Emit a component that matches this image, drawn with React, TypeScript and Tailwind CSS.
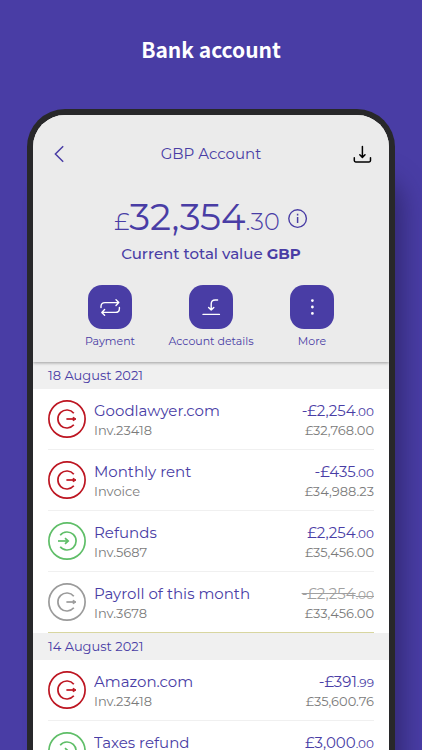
import type { ReactNode } from "react";

type IKind = "out" | "in" | "void";

type ITransaction = {
  name: string;
  reference: string;
  amount: string;
  pence: string;
  balance: string;
  kind: IKind;
};

type IDay = {
  date: string;
  items: ITransaction[];
};

const DAYS: IDay[] = [
  {
    date: "18 August 2021",
    items: [
      { name: "Goodlawyer.com", reference: "Inv.23418", amount: "-£2,254", pence: ".00", balance: "£32,768.00", kind: "out" },
      { name: "Monthly rent", reference: "Invoice", amount: "-£435", pence: ".00", balance: "£34,988.23", kind: "out" },
      { name: "Refunds", reference: "Inv.5687", amount: "£2,254", pence: ".00", balance: "£35,456.00", kind: "in" },
      { name: "Payroll of this month", reference: "Inv.3678", amount: "-£2,254", pence: ".00", balance: "£33,456.00", kind: "void" },
    ],
  },
  {
    date: "14 August 2021",
    items: [
      { name: "Amazon.com", reference: "Inv.23418", amount: "-£391", pence: ".99", balance: "£35,600.76", kind: "out" },
      { name: "Taxes refund", reference: "Inv.5688", amount: "£3,000", pence: ".00", balance: "£35,992.75", kind: "in" },
    ],
  },
];

const ICON_COLOR: Record<IKind, string> = {
  out: "text-[#bd1622]",
  in: "text-[#5fbe68]",
  void: "text-[#9b9b9b]",
};

export default function App() {
  return (
    <div className="flex h-screen flex-col overflow-hidden bg-[#493da5]">
      <h1 className="pt-[35px] text-center font-['Noto_Sans_CJK_SC','Noto_Sans',sans-serif] text-[21px] leading-7 font-semibold text-white">
        Bank account
      </h1>

      <main className="mx-[27px] mt-[46px] flex min-h-0 flex-1 flex-col overflow-hidden rounded-t-[38px] border-x-6 border-t-6 border-[#28282a] bg-white font-['Montserrat','Inter',sans-serif] text-[#493da5] shadow-[16px_60px_24px_-8px_rgba(35,28,85,0.6)]">
        <AccountHeader />
        {DAYS.map((day) => (
          <DaySection key={day.date} day={day} />
        ))}
      </main>
    </div>
  );
}

function AccountHeader() {
  return (
    <header className="relative z-10 shrink-0 bg-[#ebebeb] pb-[13px] shadow-[0_1px_3px_rgba(0,0,0,0.35)]">
      <div className="flex items-center justify-between px-[15px] pt-[27px]">
        <button type="button" aria-label="Back" className="flex size-6 items-center justify-center">
          <svg viewBox="0 0 24 24" className="size-6" fill="none" stroke="currentColor" strokeWidth="1.5">
            <path d="M15.2 4.2 7.4 12l7.8 7.8" />
          </svg>
        </button>
        <h2 className="text-[15px] leading-6">GBP Account</h2>
        <button type="button" aria-label="Download" className="flex size-6 items-center justify-center text-black">
          <svg viewBox="0 0 24 24" className="size-6" fill="none" stroke="currentColor" strokeWidth="1.5" strokeLinecap="round" strokeLinejoin="round">
            <path d="M12.4 4.6v10.6M9.8 12.8l2.6 2.6 2.6-2.6" />
            <path d="M4.3 15.8v2.8q0 1.4 1.4 1.4h13.4q1.4 0 1.4-1.4v-2.8" />
          </svg>
        </button>
      </div>

      <div className="mt-[29px] flex items-center justify-center gap-2">
        <p className="text-2xl leading-[43px] font-light">
          £<span className="text-[37px] font-normal">32,354</span>.30
        </p>
        <button type="button" aria-label="About this value" className="size-5">
          <svg viewBox="0 0 20 20" className="size-5 overflow-visible" fill="none" stroke="currentColor" strokeWidth="1.4">
            <circle cx="9.6" cy="9.6" r="8.8" />
            <path d="M9.6 8v6M9.6 4.8v1.6" strokeWidth="1.5" />
          </svg>
        </button>
      </div>
      <p className="text-center text-[15px] leading-[22px] font-medium">
        Current total value <span className="font-bold">GBP</span>
      </p>

      <nav className="mt-5 flex justify-center">
        <Action label="Payment">
          <path d="M3 12.6v-1q0-4 4-4h13.6M18 4.8l2.8 2.8-2.8 2.8" />
          <path d="M21.4 12.4v1q0 4-4 4H3.8M6.6 14.6l-2.8 2.8 2.8 2.8" />
        </Action>
        <Action label="Account details">
          <path d="M18.6 5h-2.4q-4 0-4 4v6M9.6 12.4l2.6 2.7 2.6-2.7" />
          <path d="M4 19.4h16.4" />
        </Action>
        <Action label="More">
          <path d="M12.4 5.6v.01M12.4 12v.01M12.4 18.4v.01" strokeWidth="2.8" />
        </Action>
      </nav>
    </header>
  );
}

function Action({ label, children }: { label: string; children: ReactNode }) {
  return (
    <button type="button" className="flex w-[101px] flex-col items-center">
      <span className="flex size-11 items-center justify-center rounded-[14px] bg-[#493da5] text-white">
        <svg viewBox="0 0 24 24" className="size-6" fill="none" stroke="currentColor" strokeWidth="1.4" strokeLinecap="round" strokeLinejoin="round">
          {children}
        </svg>
      </span>
      <span className="mt-1 text-[11px] leading-4 whitespace-nowrap">{label}</span>
    </button>
  );
}

function DaySection({ day }: { day: IDay }) {
  return (
    <section className="shrink-0">
      <h3 className="bg-[#f0f0f0] px-[15px] text-[13px] leading-[27px]">{day.date}</h3>
      <ul className="px-[15px]">
        {day.items.map((item) => (
          <TransactionRow key={item.name} item={item} />
        ))}
      </ul>
    </section>
  );
}

function TransactionRow({ item }: { item: ITransaction }) {
  const cancelled = item.kind === "void";

  return (
    <li className="flex items-center gap-2 border-b border-[#f0f0f0] py-[11px] last:border-[#d8d6a0]">
      <TransferIcon kind={item.kind} />
      <div className="min-w-0 flex-1">
        <p className="truncate text-[15px] leading-[22px]">{item.name}</p>
        <p className="text-[13px] leading-4 text-[#7b7b7b]">{item.reference}</p>
      </div>
      <div className="text-right">
        <p className={`text-[15px] leading-[22px] ${cancelled ? "text-[#a0a0a0] line-through" : ""}`}>
          {item.amount}
          <span className="text-xs">{item.pence}</span>
        </p>
        <p className="text-[13px] leading-4 text-[#7b7b7b]">{item.balance}</p>
      </div>
    </li>
  );
}

function TransferIcon({ kind }: { kind: IKind }) {
  return (
    <svg viewBox="0 0 38 38" className={`size-[38px] shrink-0 ${ICON_COLOR[kind]}`} fill="none" stroke="currentColor" strokeWidth="1.7">
      <circle cx="19" cy="19" r="18.1" />
      {kind === "in" ? (
        <>
          <path d="M12.2 13.2a9 9 0 1 1 0 11.6" />
          <path d="M10 19h9.6" />
          <path d="M17 16.2 20.2 19 17 21.8" />
        </>
      ) : (
        <>
          <path d="M25.8 13.2a9 9 0 1 0 0 11.6" />
          <path d="M18.4 19h7.6" />
          <path d="M25.2 17.2 28 19l-2.8 1.8z" fill="currentColor" strokeWidth="1" />
        </>
      )}
    </svg>
  );
}
